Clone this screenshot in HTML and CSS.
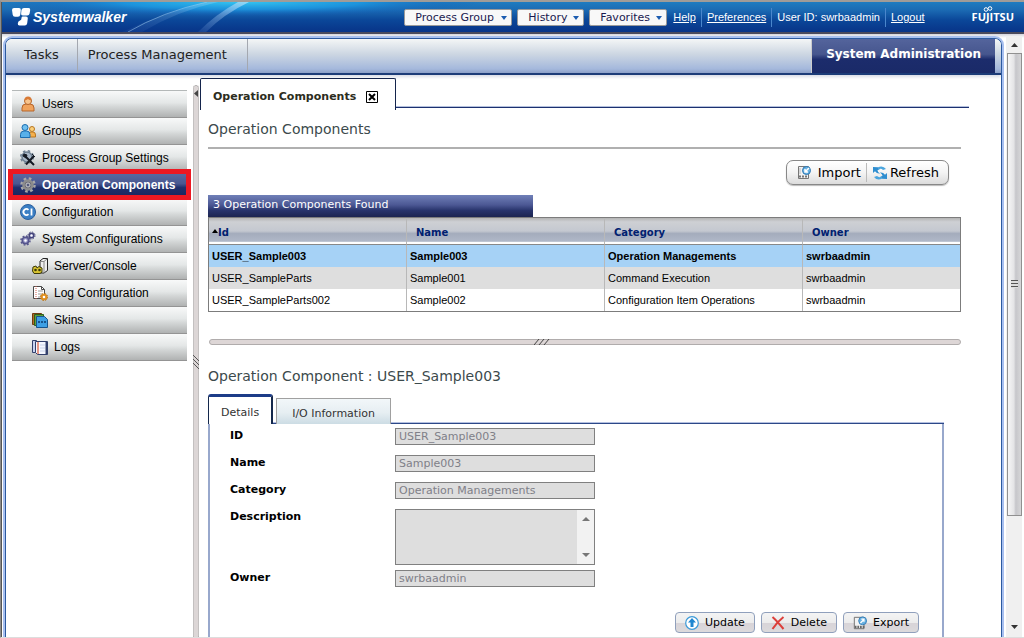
FILE: index.html
```html
<!DOCTYPE html>
<html lang="en">
<head>
    <meta charset="UTF-8">
    <meta name="viewport" content="width=device-width, initial-scale=1.0">
    <title>Systemwalker</title>
    <link rel="stylesheet" href="styles.css">
</head>
<body>
    <header class="banner">
        <svg class="beams" width="480" height="30" viewBox="0 0 480 30" aria-hidden="true">
            <defs>
                <radialGradient id="glow" cx="0.5" cy="0" r="0.5">
                    <stop offset="0" stop-color="#35c4f0"/>
                    <stop offset="0.5" stop-color="#1c9ae4" stop-opacity="0.8"/>
                    <stop offset="1" stop-color="#0c50b0" stop-opacity="0"/>
                </radialGradient>
                <linearGradient id="ray" x1="0" y1="1" x2="1" y2="0">
                    <stop offset="0" stop-color="#8fb4ec" stop-opacity="0.1"/>
                    <stop offset="1" stop-color="#bfe4fa" stop-opacity="0.7"/>
                </linearGradient>
            </defs>
            <rect width="480" height="30" fill="url(#glow)"/>
            <path d="M120 30 Q165 10 205 0 L216 0 Q175 9 140 30Z" fill="url(#ray)" opacity="0.4"/>
            <path d="M126 30 Q160 10 205 0" fill="none" stroke="#a9d4f5" stroke-opacity="0.5"/>
            <path d="M196 30 Q214 12 236 0 L247 0 Q222 12 204 30Z" fill="url(#ray)"/>
        </svg>
        <div class="brand">
            <svg width="19" height="18" viewBox="0 0 19 18" aria-hidden="true">
                <path d="M2 0h5q2 0 1.800 2l-.5 4.500q-.3 2.300-2.300 2.300H3q-2 0-2.300-2L0 2q0-2 2-2zM12 0h4.500q2 0 1.700 2l-.6 3.500q-.4 2-2.400 2h-4.400q-2 0-1.700-2L9.500 2Q10 0 12 0zM10.500 8.500H14q2 0 1.800 2l-.6 4.700q-.4 2.300-2.400 2.300H7.500q-2 0-1.700-2.300.3-2.200 2.200-2.700 1.500-.5 1.500-2.500 0-1.500 1-1.500z" fill="#fff"/>
            </svg>
            <span class="brand-name">Systemwalker</span>
        </div>
        <div class="menus">
            <span class="drop"><select class="drop-group" aria-label="Process Group"><option>Process Group</option></select></span>
            <span class="drop"><select class="drop-history" aria-label="History"><option>History</option></select></span>
            <span class="drop"><select class="drop-favorites" aria-label="Favorites"><option>Favorites</option></select></span>
        </div>
        <div class="links">
            <a href="#">Help</a>
            <a href="#">Preferences</a>
            <span>User ID: swrbaadmin</span>
            <a href="#">Logout</a>
        </div>
        <div class="fujitsu">
            <svg width="12" height="6" viewBox="0 0 12 6" aria-hidden="true">
                <circle cx="4" cy="3.500" r="1.800" fill="none" stroke="#fff"/>
                <circle cx="8" cy="2.500" r="1.800" fill="none" stroke="#fff"/>
            </svg>
            <span>FUJITSU</span>
        </div>
    </header>

    <div class="window">
        <div class="frame">
            <nav class="topnav">
                <a href="#">Tasks</a>
                <a href="#">Process Management</a>
                <a href="#" class="current">System Administration</a>
            </nav>
            <div class="columns">
                <ul class="sidebar">
                    <li><a href="#">
                        <svg width="16" height="16" viewBox="0 0 16 16"><path d="M2 15v-3q0-4 4-4h4q4 0 4 4v3z" fill="#f0a35c" stroke="#b5652a"/><circle cx="8" cy="5" r="3.500" fill="#f8c48c" stroke="#b5652a"/><path d="M4.500 4q0-3.500 3.500-3.500T11.500 4Q9 4.500 8 3 6.500 4.500 4.500 4z" fill="#d97a35"/></svg>
                        Users</a></li>
                    <li><a href="#">
                        <svg width="16" height="16" viewBox="0 0 16 16"><path d="M8 14v-2q0-3 3-3h2q2.500 0 2.500 3v2z" fill="#f6b04c" stroke="#b87620"/><circle cx="12" cy="6" r="2.500" fill="#fad07c" stroke="#b87620"/><path d="M.5 14.500v-3q0-3.500 3.500-3.500h2.500Q10 8 10 11.500v3z" fill="#58b0ea" stroke="#1d6cae"/><circle cx="5" cy="4.500" r="3" fill="#6fc0f0" stroke="#1d6cae"/></svg>
                        Groups</a></li>
                    <li><a href="#">
                        <svg width="16" height="16" viewBox="0 0 16 16"><circle cx="7" cy="7" r="5" fill="#a9b8c8" stroke="#6d7f91" stroke-width="1.500"/><circle cx="7" cy="7" r="6.300" fill="none" stroke="#6d7f91" stroke-dasharray="2.500 2.450" stroke-width="1.500"/><path d="M5 6l9 9M14 6l-8 8.500" stroke="#151b24" stroke-width="2"/><path d="M4 4l3 1-1 3-3-2zM12 4l3 3" stroke="#151b24" fill="#151b24"/></svg>
                        Process Group Settings</a></li>
                    <li class="selected"><a href="#">
                        <svg width="16" height="16" viewBox="0 0 16 16"><circle cx="8" cy="8" r="6.500" fill="none" stroke="#a8a8a8" stroke-width="2.500" stroke-dasharray="2.600 2.500"/><circle cx="8" cy="8" r="4.500" fill="#6c6c78" stroke="#8c8c8c" stroke-width="2.500"/><circle cx="8" cy="8" r="2" fill="#555b7c" stroke="#ccc"/></svg>
                        Operation Components</a></li>
                    <li><a href="#">
                        <svg width="16" height="16" viewBox="0 0 16 16"><circle cx="8" cy="8" r="7.500" fill="#3b7fc4" stroke="#2a5f9e"/><path d="M8.500 5.800A3 3 0 1 0 8.500 10.200M11.500 4.500v7" fill="none" stroke="#fff" stroke-width="1.800"/></svg>
                        Configuration</a></li>
                    <li><a href="#">
                        <svg width="16" height="16" viewBox="0 0 16 16"><circle cx="5.500" cy="9.500" r="3.200" fill="#9a9ac8" stroke="#55558c" stroke-width="1.500"/><circle cx="5.500" cy="9.500" r="4.500" fill="none" stroke="#55558c" stroke-width="1.500" stroke-dasharray="1.800 1.730"/><circle cx="5.500" cy="9.500" r="1.200" fill="#fff"/><circle cx="11.500" cy="4.500" r="2.300" fill="#b4b4dc" stroke="#44447a" stroke-width="1.500"/><circle cx="11.500" cy="4.500" r="3.500" fill="none" stroke="#44447a" stroke-dasharray="1.500 1.250"/><circle cx="11.500" cy="4.500" r="1" fill="#fff"/></svg>
                        System Configurations</a></li>
                    <li class="child"><a href="#">
                        <svg width="16" height="16" viewBox="0 0 16 16"><path d="M8 3l3-2.500h4.500v12L12 15H8z" fill="#eee" stroke="#222"/><path d="M8.500 3.500H12V15M12 3.500l3-2.500" fill="none" stroke="#888"/><path d="M1 9l3-1 1 2 2-1.500 3 1.500v4l-2 1.500H2L.5 13z" fill="#d8c432" stroke="#3c3a08"/><circle cx="3.500" cy="12" r="1.300" fill="#3c3a08"/><circle cx="7.500" cy="12" r="1.300" fill="#3c3a08"/></svg>
                        Server/Console</a></li>
                    <li class="child"><a href="#">
                        <svg width="16" height="16" viewBox="0 0 16 16"><path d="M1.500 1.500h8l3 3v9h-11z" fill="#fff" stroke="#4a4a4a"/><path d="M9.500 1.500v3h3" fill="none" stroke="#4a4a4a"/><path d="M4 1v13" stroke="#d06050" stroke-dasharray="1 1"/><path d="M6 6h5M6 9h4M6 12h3" stroke="#999"/><circle cx="12" cy="12" r="2.300" fill="#fff" stroke="#e09020" stroke-width="2"/><circle cx="12" cy="12" r="3.600" fill="none" stroke="#b87010" stroke-dasharray="1.500 1.330"/></svg>
                        Log Configuration</a></li>
                    <li class="child"><a href="#">
                        <svg width="16" height="16" viewBox="0 0 16 16"><path d="M.5 1.500h9v11h-9z" fill="#b46a24" stroke="#6e3d10"/><path d="M2.500 2.500h9v11h-9z" fill="#5ea03c" stroke="#2e5c1a"/><path d="M4.500 4.500h8l3 3v8h-11z" fill="#3d9fe4" stroke="#17548c"/><path d="M6 10h8" stroke="#17548c" stroke-width="2" stroke-dasharray="2 1"/></svg>
                        Skins</a></li>
                    <li class="child"><a href="#">
                        <svg width="16" height="16" viewBox="0 0 16 16"><path d="M.5 1.500h4v12h-4z" fill="#c8d4f0" stroke="#33406c"/><path d="M3.500 2.500h12v13h-10l-2-2z" fill="#f4f7ff" stroke="#33406c"/><path d="M6 3v12" stroke="#e07860" stroke-width="1.500"/><path d="M14.500 3v12.500" stroke="#33406c" stroke-width="2"/><path d="M8 6h5M8 9h5M8 12h5" stroke="#c9d3ea"/></svg>
                        Logs</a></li>
                </ul>

                <div class="vsplit" aria-hidden="true">
                    <svg width="6" height="10" viewBox="0 0 6 10"><path d="M5 1v7L1 4.500z" fill="#444"/></svg>
                    <svg class="vgrip" width="6" height="16" viewBox="0 0 6 16"><path d="M0 0l6 6M0 4l6 6M0 8l6 6" stroke="#555"/></svg>
                </div>

                <main class="content">
                    <div class="page-tabs">
                        <div class="page-tab">
                            Operation Components
                            <button class="close" aria-label="Close">
                                <svg width="12" height="12" viewBox="0 0 12 12"><path d="M.5.5h11v11H.5z" fill="#fff" stroke="#000"/><path d="M3 3l6 6M9 3L3 9" stroke="#000" stroke-width="2"/></svg>
                            </button>
                        </div>
                    </div>

                    <div class="page">
                        <h1>Operation Components</h1>
                        <div class="toolbar">
                            <button>
                                <svg width="16" height="16" viewBox="0 0 16 16"><path d="M2.500 1.500h10v12h-10z" fill="#f2f2f2" stroke="#777"/><path d="M3 11.500h10" stroke="#777" stroke-width="2" stroke-dasharray="2 1"/><path d="M4 3v6" stroke="#bbb"/><circle cx="10.500" cy="5.500" r="4" fill="#6ab2e2" stroke="#2d78b4"/><path d="M13 3L9 7M9 4v3h3" fill="none" stroke="#fff" stroke-width="1.500"/></svg>
                                Import</button>
                            <button>
                                <svg width="16" height="16" viewBox="0 0 16 16"><path d="M1 2v6l2-1.800Q5 9 8 8.500 5.500 7 5.500 5L7.500 4.500 6 2.200z" fill="#2f8ed0"/><path d="M6 2.200Q11 0 14 4l-3 1Q9 3 6.500 4.500z" fill="#4aa5de"/><path d="M15 14V8l-2 1.800Q11 7 8 7.500q2.500 1.500 2.500 3.500l-2 .5 1.500 2.300z" fill="#2f8ed0"/><path d="M10 13.800Q5 16 2 12l3-1q2 2 4.500.5z" fill="#4aa5de"/></svg>
                                Refresh</button>
                        </div>

                        <div class="found">3 Operation Components Found</div>
                        <table>
                            <thead>
                                <tr>
                                    <th class="sorted"><svg width="6" height="4" viewBox="0 0 6 4"><path d="M0 4h6L3 0z" fill="#000"/></svg>Id</th>
                                    <th>Name</th>
                                    <th>Category</th>
                                    <th class="last">Owner</th>
                                </tr>
                            </thead>
                            <tbody>
                                <tr class="active">
                                    <td>USER_Sample003</td>
                                    <td>Sample003</td>
                                    <td>Operation Managements</td>
                                    <td>swrbaadmin</td>
                                </tr>
                                <tr class="odd">
                                    <td>USER_SampleParts</td>
                                    <td>Sample001</td>
                                    <td>Command Execution</td>
                                    <td>swrbaadmin</td>
                                </tr>
                                <tr>
                                    <td>USER_SampleParts002</td>
                                    <td>Sample002</td>
                                    <td>Configuration Item Operations</td>
                                    <td>swrbaadmin</td>
                                </tr>
                            </tbody>
                        </table>

                        <div class="hsplit" aria-hidden="true">
                            <svg width="16" height="6" viewBox="0 0 16 6"><path d="M0 6l5-6M5 6l5-6M10 6l5-6" stroke="#444"/></svg>
                        </div>

                        <h2>Operation Component : USER_Sample003</h2>
                        <div class="detail">
                            <div class="tabs">
                                <button class="tab open">Details</button>
                                <button class="tab">I/O Information</button>
                            </div>
                            <form class="panel">
                                <div class="fields">
                                    <label for="id">ID</label>
                                    <input id="id" value="USER_Sample003" disabled>
                                    <label for="name">Name</label>
                                    <input id="name" value="Sample003" disabled>
                                    <label for="category">Category</label>
                                    <input id="category" value="Operation Managements" disabled>
                                    <label for="description">Description</label>
                                    <div class="area">
                                        <textarea id="description" disabled></textarea>
                                        <div class="area-bar">
                                            <svg width="8" height="4" viewBox="0 0 8 4"><path d="M0 4h8L4 0z" fill="#777"/></svg>
                                            <svg width="8" height="4" viewBox="0 0 8 4"><path d="M0 0h8L4 4z" fill="#777"/></svg>
                                        </div>
                                    </div>
                                    <label for="owner">Owner</label>
                                    <input id="owner" value="swrbaadmin" disabled>
                                </div>
                                <div class="actions">
                                    <button type="button">
                                        <svg width="14" height="14" viewBox="0 0 14 14"><circle cx="7" cy="7" r="6.300" fill="#fff" stroke="#3c9ad8" stroke-width="1.200"/><path d="M7 2l4 4.500H8.500V11h-3V6.500H3z" fill="#1f86d0"/></svg>
                                        Update</button>
                                    <button type="button">
                                        <svg width="14" height="14" viewBox="0 0 14 14"><path d="M1.500 1Q6 5 12.500 13M12.500 1Q6 6 1.500 13" fill="none" stroke="#dc3f3a" stroke-width="2"/></svg>
                                        Delete</button>
                                    <button type="button">
                                        <svg width="14" height="14" viewBox="0 0 16 16"><path d="M1.500 1.500h11v13h-11z" fill="#f2f2f2" stroke="#666"/><path d="M2 12.500h11" stroke="#666" stroke-width="3" stroke-dasharray="2 1"/><circle cx="11" cy="5.500" r="4.500" fill="#6ab2e2" stroke="#2d78b4"/><path d="M8.500 8l4-4M9.500 3.500h3v3" fill="none" stroke="#fff" stroke-width="1.500"/></svg>
                                        Export</button>
                                </div>
                            </form>
                        </div>
                    </div>
                </main>
            </div>
        </div>
        <div class="scrollbar" aria-hidden="true">
            <svg width="7" height="4" viewBox="0 0 7 4"><path d="M0 4h7L3.500 0z" fill="#333"/></svg>
            <div class="thumb"><i></i></div>
            <svg width="7" height="4" viewBox="0 0 7 4"><path d="M0 0h7L3.500 4z" fill="#333"/></svg>
        </div>
    </div>
</body>
</html>
```

FILE: styles.css
```css
* {
    box-sizing: border-box;
}
body {
    margin: 0;
    height: 100vh;
    display: flex;
    flex-direction: column;
    overflow: hidden;
    background: #fff;
    border-top: 2px solid #a09c98;
    border-left: 1px solid #8c8c8c;
    border-bottom: 1px solid #ddd;
    color: #000;
    font-family: Verdana, "DejaVu Sans", sans-serif;
    font-size: 11px;
}
button, input, select, textarea {
    font-family: inherit;
    font-size: inherit;
    color: inherit;
}
svg {
    flex: none;
}

/* banner */
.banner {
    position: relative;
    flex: none;
    display: flex;
    align-items: center;
    height: 32px;
    padding: 0 10px;
    background: linear-gradient(#1f7cc0 0, #1c6cb4 25%, #0b4799 60%, #083488 100%);
    border-bottom: 2px solid #4a4a5c;
    border-left: 1px solid #555;
    color: #fff;
}
.beams {
    position: absolute;
    left: 0;
    top: 0;
}
.brand {
    position: relative;
    display: flex;
    gap: 2px;
    align-items: center;
}
.brand-name {
    font: italic bold 14px/20px Arial, "Liberation Sans", sans-serif;
}
.menus {
    display: flex;
    gap: 5px;
    margin-left: auto;
}
.drop {
    position: relative;
}
.drop::after {
    content: "";
    position: absolute;
    right: 5px;
    top: 7px;
    border: 3px solid transparent;
    border-top: 4px solid #1c5cb0;
    border-bottom: 0;
}
.drop select {
    display: block;
    appearance: none;
    height: 17px;
    margin: 0;
    padding: 0 10px;
    border: 1px solid #9a9a9a;
    border-radius: 2px;
    background: #f8f8f8;
    color: #1a1a50;
}
.drop .drop-group {
    width: 108px;
}
.drop .drop-history {
    width: 67px;
}
.drop .drop-favorites {
    width: 78px;
}
.links {
    display: flex;
    margin-left: 6px;
    font-family: Arial, "Liberation Sans", sans-serif;
}
.links > * {
    padding: 0 5px;
    line-height: 19px;
    border-left: 1px solid #4a86cc;
    color: #fff;
}
.links > :first-child {
    padding-left: 0;
    border-left: 0;
}
.fujitsu {
    position: relative;
    margin-left: 42px;
    font: bold 11px/14px "Open Sans", sans-serif;
}
.fujitsu svg {
    position: absolute;
    left: 10px;
    top: -4px;
}

/* window */
.window {
    flex: 1;
    min-height: 0;
    display: flex;
    padding: 4px 2px 0 3px;
    background: linear-gradient(#d4d4dc, #fff 4px);
    border-left: 1px solid #555;
}
.frame {
    flex: 1;
    min-width: 0;
    overflow: hidden;
    display: flex;
    flex-direction: column;
    border: 1px solid #2c5aa0;
    border-bottom: 0;
    border-radius: 7px 7px 0 0;
    box-shadow: 0 0 0 2px #a8c0f0;
}
.topnav {
    flex: none;
    display: flex;
    height: 36px;
    padding-right: 6px;
    background: linear-gradient(#f4f6f6, #ccd6e2 45%, #a4b8dc 88%, #8ca0c8);
    border-bottom: 2px solid #1c3c78;
    box-shadow: 0 2px 3px #d8dce6;
    font-size: 13px;
    line-height: 31px;
}
.topnav a {
    padding: 0 20px 0 10px;
    border-right: 1px solid #a4a8b0;
    color: #222;
    text-decoration: none;
}
.topnav a:first-child {
    padding: 0 18px;
}
.topnav .current {
    margin-left: auto;
    padding: 0 14px;
    border-right: 0;
    border-left: 1px solid #ccc;
    background: linear-gradient(#54649c, #46568e 45%, #1c2c6c 60%, #1a2a68);
    color: #fff;
    font-size: 12px;
    font-weight: bold;
}
.columns {
    flex: 1;
    min-height: 0;
    display: flex;
}

/* sidebar */
.sidebar {
    flex: none;
    align-self: flex-start;
    width: 175px;
    margin: 15px 6px 0;
    padding: 0;
    list-style: none;
    border-top: 1px solid #b4b8b8;
    font: 12px Arial, "Liberation Sans", sans-serif;
}
.sidebar li {
    position: relative;
}
.sidebar a {
    display: flex;
    align-items: center;
    gap: 6px;
    height: 27px;
    padding: 0 8px 1px;
    background: linear-gradient(#f8f9f9, #e4e7e7 45%, #d4d7d7 60%, #b0b2b2);
    border-bottom: 1px solid #949494;
    color: #000;
    text-decoration: none;
}
.sidebar .child a {
    padding-left: 20px;
}
.sidebar .selected {
    z-index: 1;
}
.sidebar .selected a {
    background: linear-gradient(#5c6ca4, #4a5890 45%, #20306c 60%, #18245c);
    color: #fff;
    font-weight: bold;
}
.sidebar .selected::after {
    content: "";
    position: absolute;
    inset: -3px -4px -1px;
    border: 5px solid #ed1822;
}
.vsplit {
    flex: none;
    width: 6px;
    margin: 10px 1px 0 0;
    border: 1px dotted #aaa;
    border-bottom: 0;
    border-radius: 4px 4px 0 0;
    background: #dcd6d6;
    display: flex;
    flex-direction: column;
    align-items: center;
    padding-top: 3px;
}
.vgrip {
    margin-top: 256px;
}

/* content */
.content {
    flex: 1;
    min-width: 0;
    padding: 3px 32px 0 0;
}
.page-tabs {
    display: flex;
    background: linear-gradient(#b4c0dc, #b4c0dc) 0 28px / 100% 1px no-repeat,
                linear-gradient(#1c3070, #1c3070) 0 29px / 100% 1px no-repeat;
}
.page-tab {
    display: flex;
    align-items: center;
    gap: 10px;
    height: 32px;
    padding: 4px 17px 0 12px;
    background: #fff;
    border: 1px solid #14244c;
    border-bottom: 0;
    border-radius: 2px 2px 0 0;
    color: #2c2c20;
    font-weight: bold;
}
.close {
    padding: 0;
    border: 0;
    background: none;
    line-height: 0;
}
.page {
    padding: 0 8px;
}
h1, h2 {
    margin: 0;
    color: #3c4a4c;
    font-size: 14px;
    font-weight: normal;
}
h1 {
    padding: 9px 0 8px;
    line-height: 20px;
    border-bottom: 2px solid #b0b0b0;
}
.toolbar {
    display: flex;
    width: max-content;
    margin: 11px 12px 10px auto;
    padding: 2px 4px;
    border: 1px solid #888;
    border-radius: 7px;
    background: linear-gradient(#fff, #f4f4f4 50%, #dcdcdc);
    box-shadow: 0 1px 1px #bbb;
}
.toolbar button {
    display: flex;
    align-items: center;
    gap: 2px;
    height: 19px;
    padding: 0 5px;
    border: 0;
    background: none;
    font-size: 13px;
}
.toolbar button + button {
    border-left: 1px solid #bbb;
}
.toolbar button:first-child {
    gap: 6px;
}
.found {
    width: 325px;
    height: 22px;
    padding-left: 5px;
    background: linear-gradient(#7080b8, #4c5894 45%, #28346c 70%, #1c2450);
    color: #fff;
    line-height: 19px;
}
table {
    width: 100%;
    table-layout: fixed;
    border-collapse: separate;
    border-spacing: 0;
    border: 1px solid #7c7c7c;
    font-family: Arial, "Liberation Sans", sans-serif;
}
th, td {
    padding: 0 3px;
    text-align: left;
    border-left: 1px solid #b8b8b8;
    white-space: nowrap;
}
th:first-child, td:first-child {
    border-left: 0;
}
th {
    width: 198px;
    height: 27px;
    padding: 3px 9px 0;
    background: linear-gradient(#b4b4b4, #ced0d4 15%, #c4c8d0 50%, #a4acbc 60%, #b0b8c8 90%, #fff 92%);
    border-bottom: 1px solid #888;
    color: #002070;
    font-family: Verdana, "DejaVu Sans", sans-serif;
    font-size: 10px;
}
th.sorted {
    width: 197px;
    padding-left: 3px;
}
th.sorted svg {
    margin-bottom: 3px;
}
th.last {
    width: auto;
}
td {
    height: 22px;
}
.active {
    background: #a6d2f6;
    font-weight: bold;
}
.odd {
    background: #dedede;
}
.hsplit {
    height: 6px;
    margin: 27px 0 21px 1px;
    border: 1px solid #b0acac;
    border-radius: 3px;
    background: #ddd6d6;
    line-height: 0;
    padding-left: 324px;
}
.hsplit svg {
    display: block;
    margin-top: -1px;
}
h2 {
    line-height: 20px;
}

/* detail panel */
.detail {
    margin: 8px 17px 0 0;
}
.tabs {
    display: flex;
    align-items: flex-end;
    gap: 3px;
    height: 30px;
    background: linear-gradient(#b4c0e0, #b4c0e0) 0 28px / 100% 1px no-repeat,
                linear-gradient(#2c4888, #2c4888) 0 29px / 100% 1px no-repeat;
}
.tab {
    height: 26px;
    padding: 4px 15px 0;
    border: 1px solid #a0a0a0;
    border-bottom: 0;
    background: linear-gradient(#f2f7f9, #e6eef2 55%, #ccdce4);
    color: #333;
}
.tab.open {
    height: 30px;
    padding: 4px 12px 0;
    border: 2px solid #14284c;
    border-width: 3px 2px 0 1px;
    border-top-color: #1c3c88;
    border-radius: 3px 3px 0 0;
    background: #fff;
}
.panel {
    height: 260px;
    padding: 4px 23px 0 20px;
    border: 2px solid #98a8cc;
    border-top: 0;
}
.fields {
    display: grid;
    grid-template-columns: 165px 200px;
    row-gap: 10px;
}
.fields label {
    font-weight: bold;
    line-height: 15px;
}
.fields input {
    height: 17px;
    width: 100%;
    padding: 0 3px;
    border: 1px solid #808080;
    background: #dedede;
    color: #808088;
}
.area {
    display: flex;
    height: 56px;
    margin-bottom: -5px;
    border: 1px solid #808080;
    background: #dedede;
}
.area textarea {
    flex: 1;
    min-width: 0;
    border: 0;
    resize: none;
    background: none;
}
.area-bar {
    display: flex;
    flex-direction: column;
    align-items: center;
    justify-content: space-between;
    width: 17px;
    padding: 7px 0;
    background: #f2f2f2;
}
.actions {
    display: flex;
    justify-content: flex-end;
    gap: 6px;
    margin-top: 25px;
}
.actions button {
    display: flex;
    align-items: center;
    gap: 6px;
    height: 21px;
    padding: 0 9px;
    border: 1px solid #90a0bc;
    border-radius: 4px;
    background: linear-gradient(#f4f4f4, #ececec 50%, #d8d4d8 55%, #dcdadc);
}

/* page scroll bar */
.scrollbar {
    flex: none;
    display: flex;
    flex-direction: column;
    align-items: center;
    width: 16px;
    margin: -2px 0 0 4px;
    padding: 7px 0 8px;
    background: #f0f0f0;
}
.thumb {
    display: flex;
    align-items: center;
    justify-content: center;
    width: 15px;
    height: 79%;
    margin: 6px 0 auto;
    border: 1px solid #909090;
    background: linear-gradient(90deg, #f6f6f6, #e4e4e6 45%, #c6c6ca 60%, #d6d6d8);
}
.thumb i {
    width: 7px;
    height: 8px;
    background: repeating-linear-gradient(#555 0 1px, #ddd 1px 3px);
}
```
